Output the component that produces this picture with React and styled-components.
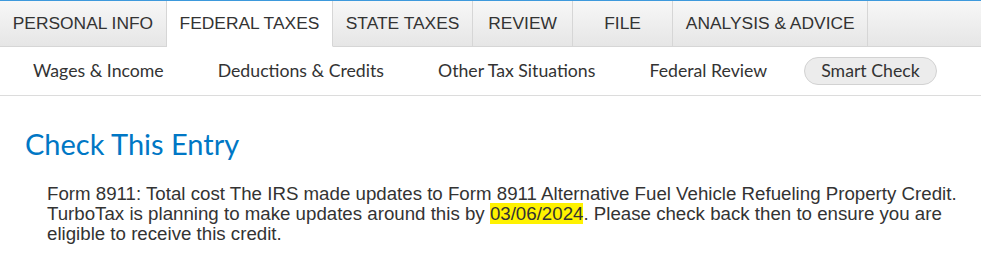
import React from "react";
import styled, { createGlobalStyle } from "styled-components";

const GlobalStyle = createGlobalStyle`
  body {
    margin: 0;
    background: #fff;
    font-family: "Liberation Sans", Arial, sans-serif;
    color: #333;
  }
`;

const mainTabs = [
  { label: "PERSONAL INFO" },
  { label: "FEDERAL TAXES", active: true },
  { label: "STATE TAXES" },
  { label: "REVIEW" },
  { label: "FILE" },
  { label: "ANALYSIS & ADVICE" },
];

const subTabs = [
  { label: "Wages & Income" },
  { label: "Deductions & Credits" },
  { label: "Other Tax Situations" },
  { label: "Federal Review" },
  { label: "Smart Check", active: true },
];

const App = () => {
  return (
    <Page>
      <GlobalStyle />
      <TabBar>
        {mainTabs.map((t) => (
          <Tab key={t.label} $active={t.active}>{t.label}</Tab>
        ))}
        <TabFiller />
      </TabBar>
      <SubNav>
        {subTabs.map((t) => (
          <SubItem key={t.label} $active={t.active}>{t.label}</SubItem>
        ))}
      </SubNav>
      <Content>
        <Title>Check This Entry</Title>
        <Message>
          Form 8911: Total cost The IRS made updates to Form 8911 Alternative Fuel Vehicle
          Refueling Property Credit. TurboTax is planning to make updates around this by{" "}
          <Highlight>03/06/2024</Highlight>. Please check back then to ensure you are
          eligible to receive this credit.
        </Message>
      </Content>
    </Page>
  );
};

export default App;

const Page = styled.div`
  width: 981px;
  height: 270px;
  overflow: hidden;
  border-top: 1px solid #3d99dc;
  box-sizing: border-box;
`;

const TabBar = styled.div`
  display: flex;
  height: 46px;
`;

const Tab = styled.div`
  min-width: 100px;
  box-sizing: border-box;
  padding: 0 12.7px;
  display: flex;
  align-items: center;
  justify-content: center;
  font-size: 17.4px;
  color: #333;
  white-space: nowrap;
  border-right: 1px solid #d6d6d6;
  border-bottom: 1px solid ${(p) => (p.$active ? "transparent" : "#d6d6d6")};
  background: ${(p) =>
    p.$active ? "#fff" : "linear-gradient(#f7f7f7, #e6e6e6)"};
`;

const TabFiller = styled.div`
  flex: 1;
  border-bottom: 1px solid #d6d6d6;
  background: linear-gradient(#f7f7f7, #e6e6e6);
`;

const SubNav = styled.div`
  display: flex;
  align-items: center;
  gap: 20px;
  height: 48px;
  padding-left: 16px;
  border-bottom: 1px solid #dcdcdc;
`;

const SubItem = styled.div`
  font-family: Lato, "Open Sans", sans-serif;
  font-size: 17.7px;
  color: #333;
  height: 28px;
  line-height: 26px;
  padding: 0 16px;
  box-sizing: border-box;
  border-radius: 14px;
  white-space: nowrap;
  border: 1px solid ${(p) => (p.$active ? "#d2d2d2" : "transparent")};
  background: ${(p) => (p.$active ? "#ececec" : "transparent")};
`;

const Content = styled.div`
  padding: 30px 25px 0;
`;

const Title = styled.h1`
  margin: 0 0 22px;
  font-family: Lato, "Open Sans", sans-serif;
  font-weight: 400;
  font-size: 29px;
  color: #0077c5;
  line-height: 36px;
`;

const Message = styled.p`
  margin: 0 0 0 22px;
  width: 925px;
  font-size: 18.7px;
  line-height: 20px;
  color: #333;
`;

const Highlight = styled.span`
  background: #fff200;
`;
